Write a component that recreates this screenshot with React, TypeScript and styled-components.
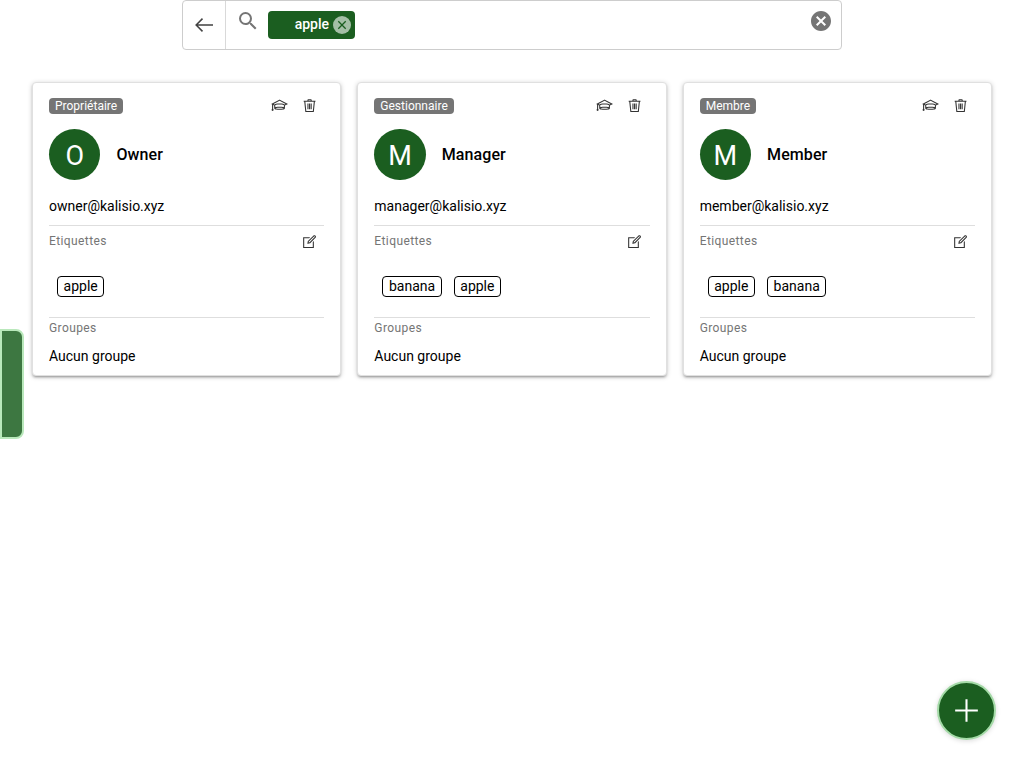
import React from 'react';
import styled, { createGlobalStyle } from 'styled-components';
import {
  LiaArrowLeftSolid,
  LiaEditSolid,
  LiaGraduationCapSolid,
  LiaPlusSolid,
  LiaTrashSolid,
} from 'react-icons/lia';
import { MdCancel, MdSearch } from 'react-icons/md';

const GlobalStyle = createGlobalStyle`
  *, *::before, *::after { box-sizing: border-box; }
  body {
    margin: 0;
    background: #fff;
    color: #000;
    font: 14px/21px Roboto, sans-serif;
  }
  button { font: inherit; color: inherit; background: none; border: 0; padding: 0; }
  svg { display: block; }
`;

const Page = styled.div`
  height: 768px;
  overflow: hidden;
`;

const SearchBar = styled.header`
  display: flex;
  width: 660px;
  height: 50px;
  margin: 0 auto;
  border: 1px solid #cdcdcd;
  border-radius: 4px;
`;

const BackButton = styled.button`
  display: flex;
  align-items: center;
  justify-content: center;
  width: 43px;
  border-right: 1px solid #d9d9d9;
  color: #424242;
  font-size: 24px;
`;

const SearchField = styled.div`
  display: flex;
  flex: 1;
  align-items: flex-start;
  padding: 8px 8px 0 10px;
  color: #757575;
`;

const FilterChip = styled.div`
  display: flex;
  align-items: center;
  justify-content: flex-end;
  width: 87px;
  height: 28px;
  margin: 2px auto 0 8px;
  padding-right: 4px;
  gap: 4px;
  border-radius: 4px;
  background: #1b5e20;
  color: #fff;
  font-weight: 500;
  span { padding-bottom: 2px; }
`;

const Grid = styled.main`
  display: grid;
  grid-template-columns: repeat(3, 1fr);
  gap: 16px;
  padding: 32px 32px 0;
`;

const Card = styled.article`
  height: 294.3px;
  padding: 15px 16px 0;
  border: 1px solid #e0e0e0;
  border-radius: 4px;
  background: #fff;
  box-shadow: 0 1px 5px rgba(0, 0, 0, 0.2), 0 2px 2px rgba(0, 0, 0, 0.14),
    0 3px 1px -2px rgba(0, 0, 0, 0.12);
`;

const CardHeader = styled.div`
  display: flex;
  align-items: center;
  justify-content: space-between;
  height: 16px;
`;

const RoleBadge = styled.span`
  height: 16px;
  padding: 2px 6px;
  border-radius: 4px;
  background: #757575;
  color: #fff;
  font-size: 12px;
  line-height: 12px;
`;

const Actions = styled.div`
  display: flex;
  gap: 13px;
  padding-right: 6.1px;
  color: #333;
  font-size: 17.15px;
`;

const Identity = styled.div`
  display: flex;
  align-items: center;
  gap: 16px;
  margin-top: 15px;
`;

const Avatar = styled.div`
  display: flex;
  align-items: center;
  justify-content: center;
  width: 51.4px;
  height: 51.2px;
  padding-top: 3px;
  border-radius: 50%;
  background: #1b5e20;
  color: #fff;
  font-size: 27px;
`;

const Name = styled.div`
  font-size: 16px;
  font-weight: 500;
  letter-spacing: 0.1px;
`;

const Email = styled.div`
  height: 28.8px;
  margin-top: 16px;
`;

const Section = styled.section`
  border-top: 1px solid #dedede;
`;

const SectionHeader = styled.div<{ $height: number }>`
  display: flex;
  align-items: center;
  justify-content: space-between;
  height: ${({ $height }) => $height}px;
  padding-right: 6.1px;
  color: #757575;
  font-size: 12px;
  letter-spacing: 0.4px;
  svg { color: #333; font-size: 17.15px; }
`;

const Tags = styled.div`
  display: flex;
  gap: 12px;
  height: 60px;
  padding: 19px 8px 0;
`;

const Tag = styled.span`
  height: 21px;
  padding: 0 5.6px;
  border: 1px solid #000;
  border-radius: 4px;
  line-height: 19px;
`;

const Groups = styled.div`
  padding-top: 6px;
`;

const DrawerHandle = styled.div`
  position: absolute;
  top: 329px;
  left: 0;
  width: 24px;
  height: 110px;
  border: 2px solid #b9e8bb;
  border-radius: 0 8px 8px 0;
  background: #3d7741;
`;

const AddButton = styled.button`
  position: absolute;
  top: 681px;
  left: 937px;
  display: flex;
  align-items: center;
  justify-content: center;
  width: 59px;
  height: 59px;
  padding-bottom: 1px;
  border: 2px solid #a5dba8;
  border-radius: 50%;
  background: #1b5e20;
  color: #fff;
  font-size: 33px;
  box-shadow: 0 1px 5px rgba(0, 0, 0, 0.15);
`;

const RemoveIcon = () => (
  <svg width="18" height="18" viewBox="0 0 18 18">
    <circle cx="9" cy="9" r="9" fill="#a4bfa6" />
    <path d="M5.3 5.3l7.4 7.4M12.7 5.3l-7.4 7.4" stroke="#1b5e20" strokeWidth="1.3" />
  </svg>
);

const members = [
  { role: 'Propriétaire', name: 'Owner', email: 'owner@kalisio.xyz', tags: ['apple'] },
  { role: 'Gestionnaire', name: 'Manager', email: 'manager@kalisio.xyz', tags: ['banana', 'apple'] },
  { role: 'Membre', name: 'Member', email: 'member@kalisio.xyz', tags: ['apple', 'banana'] },
];

export default function App() {
  return (
    <Page>
      <GlobalStyle />
      <SearchBar>
        <BackButton><LiaArrowLeftSolid /></BackButton>
        <SearchField>
          <MdSearch size={24} />
          <FilterChip><span>apple</span><RemoveIcon /></FilterChip>
          <MdCancel size={24} />
        </SearchField>
      </SearchBar>
      <Grid>
        {members.map((m) => (
          <Card key={m.name}>
            <CardHeader>
              <RoleBadge>{m.role}</RoleBadge>
              <Actions><LiaGraduationCapSolid /><LiaTrashSolid /></Actions>
            </CardHeader>
            <Identity>
              <Avatar>{m.name[0]}</Avatar>
              <Name>{m.name}</Name>
            </Identity>
            <Email>{m.email}</Email>
            <Section>
              <SectionHeader $height={31}>Etiquettes<LiaEditSolid /></SectionHeader>
              <Tags>{m.tags.map((t) => <Tag key={t}>{t}</Tag>)}</Tags>
            </Section>
            <Section>
              <SectionHeader $height={22}>Groupes</SectionHeader>
              <Groups>Aucun groupe</Groups>
            </Section>
          </Card>
        ))}
      </Grid>
      <DrawerHandle />
      <AddButton><LiaPlusSolid /></AddButton>
    </Page>
  );
}
